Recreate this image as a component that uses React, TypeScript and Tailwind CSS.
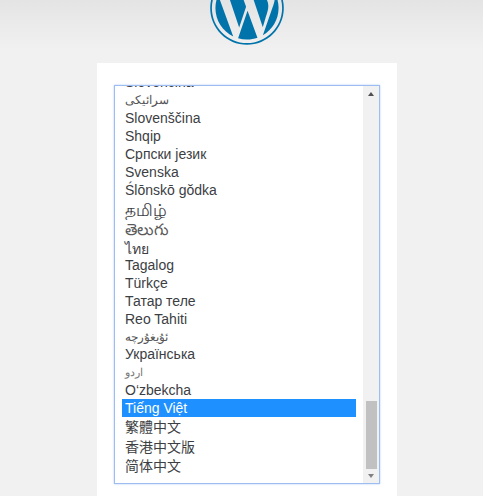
import { FaWordpress } from 'react-icons/fa';

// languages visible in the scrolled list, h = row height in the select
const langs = [
  { name: 'Slovenčina', h: 'h-[18px]' },
  { name: 'سرائیکی', h: 'h-[18px] text-[12px] text-[#555]' },
  { name: 'Slovenščina', h: 'h-[18px]' },
  { name: 'Shqip', h: 'h-[18px]' },
  { name: 'Српски језик', h: 'h-[18px]' },
  { name: 'Svenska', h: 'h-[18px]' },
  { name: 'Ślōnskō gŏdka', h: 'h-[19px]' },
  { name: 'தமிழ்', h: 'h-[20px] text-[17px]' },
  { name: 'తెలుగు', h: 'h-[19px] text-[16px] text-[#5a5a5a]' },
  { name: 'ไทย', h: 'h-[17px] pt-[3px]' },
  { name: 'Tagalog', h: 'h-[18px]' },
  { name: 'Türkçe', h: 'h-[18px]' },
  { name: 'Татар теле', h: 'h-[18px]' },
  { name: 'Reo Tahiti', h: 'h-[18px]' },
  { name: 'ئۇيغۇرچە', h: 'h-[18px] text-[12px] text-[#555]' },
  { name: 'Українська', h: 'h-[17px]' },
  { name: 'اردو', h: 'h-[18px] text-[11px] text-[#777]' },
  { name: 'O‘zbekcha', h: 'h-[18px]' },
  { name: 'Tiếng Việt', h: 'h-[18px] bg-[#1e90ff] text-white' },
  { name: '繁體中文', h: 'h-[21px]' },
  { name: '香港中文版', h: 'h-[18px]' },
  { name: '简体中文', h: 'h-[20px]' },
];

export default function App() {
  return (
    <div className="h-[496px] w-[483px] overflow-hidden bg-gradient-to-b from-[#e4e4e4] to-[#f1f1f1] to-[50px] pl-[97px]">
      <div className="flex h-[63px] w-[300px] justify-center overflow-hidden">
        <FaWordpress className="-mt-[30px] h-[76px] w-[76px] shrink-0 text-[#0073aa]" />
      </div>
      <div className="h-[433px] w-[300px] bg-white px-[17px] pt-[22px]">
        <div className="flex h-[399px] w-[266px] overflow-hidden border border-[#9dbcf0] shadow-[0_0_2px_#b4ccf4]">
          <div className="flex-1 overflow-hidden pl-[7px] pr-[7px] font-['Liberation_Sans','Noto_Sans','Noto_Sans_CJK_TC','Noto_Sans_CJK_SC',sans-serif]">
            <ul className="-mt-[13px] text-[14px] leading-[17px] text-[#3c4043]">
              {langs.map(l => (
                <li key={l.name} className={`flex items-center pl-[3px] ${l.h}`}>
                  {l.name}
                </li>
              ))}
            </ul>
          </div>
          <div className="flex w-[16px] flex-col items-center bg-[#f1f1f1]">
            <div className="mt-[6px] h-0 w-0 border-x-[3.5px] border-b-[4px] border-x-transparent border-b-[#505050]" />
            <div className="mt-[305px] h-[68px] w-[11px] bg-[#c1c1c1]" />
            <div className="mt-[5px] h-0 w-0 border-x-[3.5px] border-t-[4px] border-x-transparent border-t-[#808080]" />
          </div>
        </div>
      </div>
    </div>
  );
}
